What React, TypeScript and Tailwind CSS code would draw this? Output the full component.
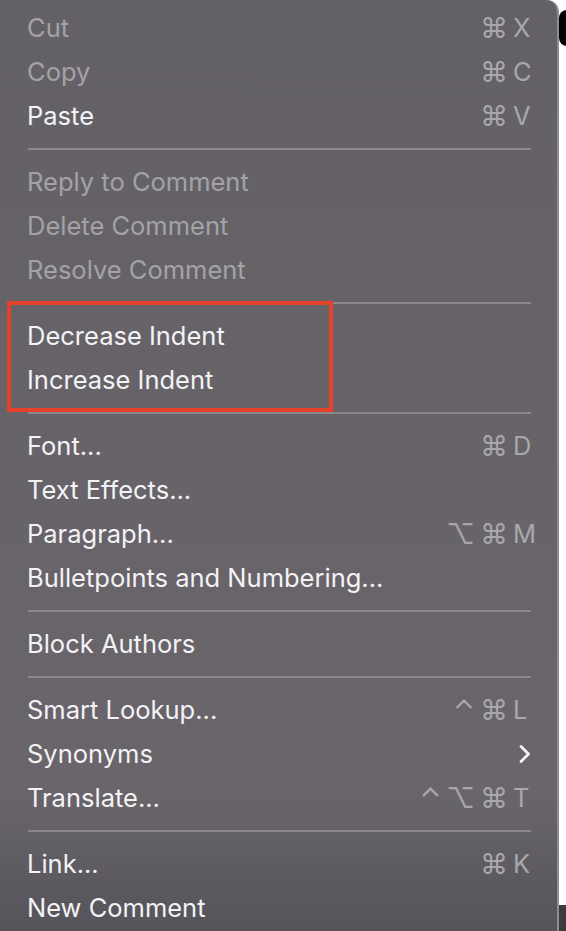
type Item = {
  label: string;
  disabled?: boolean;
  mods?: string;
  keyChar?: string;
  submenu?: boolean;
};

const groups: Item[][] = [
  [
    { label: "Cut", disabled: true, mods: "⌘", keyChar: "X" },
    { label: "Copy", disabled: true, mods: "⌘", keyChar: "C" },
    { label: "Paste", mods: "⌘", keyChar: "V" },
  ],
  [
    { label: "Reply to Comment", disabled: true },
    { label: "Delete Comment", disabled: true },
    { label: "Resolve Comment", disabled: true },
  ],
  [{ label: "Decrease Indent" }, { label: "Increase Indent" }],
  [
    { label: "Font...", mods: "⌘", keyChar: "D" },
    { label: "Text Effects..." },
    { label: "Paragraph...", mods: "⌥⌘", keyChar: "M" },
    { label: "Bulletpoints and Numbering..." },
  ],
  [{ label: "Block Authors" }],
  [
    { label: "Smart Lookup...", mods: "⌃⌘", keyChar: "L" },
    { label: "Synonyms", submenu: true },
    { label: "Translate...", mods: "⌃⌥⌘", keyChar: "T" },
  ],
  [{ label: "Link...", mods: "⌘", keyChar: "K" }, { label: "New Comment" }],
];

function Row({ item }: { item: Item }) {
  return (
    <div className="flex h-[44px] items-center justify-between pl-[27px] pr-[22px]">
      <span className={item.disabled ? "text-[#a4a2a6]" : "text-[#f3f2f4]"}>{item.label}</span>
      {item.keyChar && (
        <span className="flex items-center text-[#a9a7ab]">
          <span className="text-[28px] leading-none tracking-[5px]">{item.mods}</span>
          <span className="w-[22px] text-left">{item.keyChar}</span>
        </span>
      )}
      {item.submenu && (
        <span className="flex w-[24px] justify-end pr-[4px] text-[#f3f2f4]">
          {/* submenu chevron */}
          <svg width="12" height="18" viewBox="0 0 12 18" fill="none">
            <path d="M2 1.5 L9.5 9 L2 16.5" stroke="currentColor" strokeWidth="2.8" strokeLinecap="round" strokeLinejoin="round" />
          </svg>
        </span>
      )}
    </div>
  );
}

export default function App() {
  return (
    <div
      className="flex h-[931px] w-[566px] overflow-hidden bg-white text-[25.5px]"
      style={{ fontFamily: "Inter, 'DejaVu Sans', sans-serif" }}
    >
      <div className="relative w-[559px] shrink-0 rounded-tr-[12px] border-r-2 border-[#8f8d92] bg-gradient-to-b from-[#646166] via-[#69656b] via-85% to-[#55545a] pt-[6px]">
        {groups.map((g, gi) => (
          <div key={gi}>
            {gi > 0 && (
              <div className="flex h-[22px] items-center pl-[28px] pr-[26px]">
                <div className="h-[2px] w-full bg-[#8b888d]" />
              </div>
            )}
            {g.map((item) => (
              <Row key={item.label} item={item} />
            ))}
          </div>
        ))}
        {/* highlight annotation */}
        <div className="absolute left-[7px] top-[301px] h-[111px] w-[326px] border-[4px] border-[#e5412b]" />
      </div>
      <div className="flex flex-1 flex-col justify-between">
        <div className="mt-[10px] h-[36px] w-[16px] rounded-full bg-black" />
        <div className="h-[26px] w-full bg-[#3c3b3e]" />
      </div>
    </div>
  );
}
